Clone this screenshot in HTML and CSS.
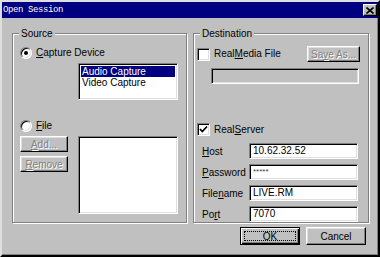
FILE: index.html
```html
<!DOCTYPE html>
<html lang="en">
<head>
    <meta charset="UTF-8">
    <title>Open Session</title>
    <link rel="stylesheet" href="styles.css">
</head>
<body>
    <div class="window">
        <div class="titlebar">
            <span class="title">Open Session</span>
            <span class="close">
                <svg width="8" height="7" viewBox="0 0 8 7">
                    <path d="M0.5 0.5 L7.5 6.5 M7.5 0.5 L0.5 6.5" stroke="#000" stroke-width="1.6" fill="none"/>
                </svg>
            </span>
        </div>

        <div class="content">
            <div class="groups">
                <!-- Source group -->
                <section class="group source">
                    <span class="legend">Source</span>
                    <label class="option">
                        <span class="radio checked"></span>
                        <span><u>C</u>apture Device</span>
                    </label>
                    <div class="listbox devices">
                        <div class="item selected">Audio Capture</div>
                        <div class="item">Video Capture</div>
                    </div>
                    <label class="option file-option">
                        <span class="radio"></span>
                        <span><u>F</u>ile</span>
                    </label>
                    <div class="file-area">
                        <div class="file-buttons">
                            <span class="btn small disabled"><u>A</u>dd...</span>
                            <span class="btn small disabled"><u>R</u>emove</span>
                        </div>
                        <div class="listbox files"></div>
                    </div>
                </section>

                <!-- Destination group -->
                <section class="group dest">
                    <span class="legend">Destination</span>
                    <div class="media-row">
                        <label class="option">
                            <span class="checkbox"></span>
                            <span>Real<u>M</u>edia File</span>
                        </label>
                        <span class="btn saveas disabled">Sa<u>v</u>e As...</span>
                    </div>
                    <div class="field path-field"></div>
                    <label class="option server-option">
                        <span class="checkbox">
                            <svg width="9" height="9" viewBox="0 0 9 9">
                                <path d="M1 4 L3.3 6.5 L8 1.5" stroke="#000" stroke-width="1.8" fill="none"/>
                            </svg>
                        </span>
                        <span>Real<u>S</u>erver</span>
                    </label>
                    <div class="server-grid">
                        <span class="field-label"><u>H</u>ost</span>
                        <span class="field">10.62.32.52</span>
                        <span class="field-label"><u>P</u>assword</span>
                        <span class="field password">*****</span>
                        <span class="field-label">File<u>n</u>ame</span>
                        <span class="field">LIVE.RM</span>
                        <span class="field-label">Po<u>r</u>t</span>
                        <span class="field">7070</span>
                    </div>
                </section>
            </div>

            <div class="actions">
                <span class="btn default"><span class="focus">OK</span></span>
                <span class="btn">Cancel</span>
            </div>
        </div>
    </div>
</body>
</html>
```

FILE: styles.css
```css
/* Global styles */
* {
    box-sizing: border-box;
}

body {
    margin: 0;
    background-color: #c0c0c0;
    font-family: "Liberation Sans", Arial, sans-serif;
    font-size: 10px;
    color: #000;
}

u {
    text-decoration: underline;
    text-underline-offset: 1px;
}

/* Window frame */
.window {
    width: 380px;
    height: 257px;
    border-style: solid;
    border-width: 2px;
    border-color: #dfdfdf #000 #000 #dfdfdf;
    box-shadow: inset -1px -1px 0 #808080;
    display: flex;
    flex-direction: column;
}

.titlebar {
    height: 16px;
    background-color: #000080;
    display: flex;
    align-items: center;
    justify-content: space-between;
    padding: 0 1px 0 1px;
}

.title {
    color: #fff;
    font-family: "Liberation Mono", monospace;
    font-size: 9px;
    letter-spacing: -0.4px;
}

.close {
    width: 14px;
    height: 12px;
    background-color: #c0c0c0;
    border: 1px solid;
    border-color: #fff #000 #000 #fff;
    box-shadow: inset -1px -1px 0 #808080;
    display: flex;
    align-items: center;
    justify-content: center;
}

.close svg {
    display: block;
}

.content {
    flex: 1;
    padding: 15px 9px 0 10px;
    display: flex;
    flex-direction: column;
}

.groups {
    display: flex;
    gap: 6px;
}

/* Etched group boxes */
.group {
    position: relative;
    height: 190px;
    border: 1px solid #808080;
    box-shadow: inset 1px 1px 0 #fff, 1px 1px 0 #fff;
    display: flex;
    flex-direction: column;
}

.legend {
    position: absolute;
    top: -7px;
    left: 6px;
    padding: 0 2px;
    background-color: #c0c0c0;
    line-height: 13px;
}

.source {
    width: 175px;
    padding: 13px 8px 0 7px;
}

.dest {
    width: 176px;
    padding: 12px 8px 0 3px;
}

/* Radio buttons and check boxes */
.option {
    display: flex;
    align-items: center;
    gap: 4px;
    height: 12px;
    line-height: 12px;
}

.radio {
    width: 12px;
    height: 12px;
    border-radius: 50%;
    background-color: #fff;
    border: 1px solid;
    border-color: #808080 #fff #fff #808080;
    box-shadow: inset 1px 1px 0 #000, inset -1px -1px 0 #dfdfdf;
    display: flex;
    align-items: center;
    justify-content: center;
}

.radio.checked::after {
    content: "";
    width: 4px;
    height: 4px;
    border-radius: 50%;
    background-color: #000;
}

.checkbox {
    width: 13px;
    height: 13px;
    background-color: #fff;
    border: 1px solid;
    border-color: #808080 #fff #fff #808080;
    box-shadow: inset 1px 1px 0 #000, inset -1px -1px 0 #dfdfdf;
    display: flex;
    align-items: center;
    justify-content: center;
}

.checkbox svg {
    display: block;
}

/* Sunken boxes */
.listbox,
.field {
    background-color: #fff;
    border: 1px solid;
    border-color: #808080 #fff #fff #808080;
    box-shadow: inset 1px 1px 0 #000, inset -1px -1px 0 #dfdfdf;
}

.listbox {
    padding: 2px;
}

.devices {
    width: 100px;
    height: 37px;
    margin: 4px 0 0 58px;
}

.item {
    height: 11px;
    line-height: 11px;
    padding-left: 1px;
}

.item.selected {
    background-color: #000080;
    color: #fff;
}

.file-option {
    margin-top: 20px;
}

.file-area {
    display: flex;
    gap: 10px;
    margin-top: 4px;
}

.file-buttons {
    display: flex;
    flex-direction: column;
    gap: 4px;
}

.files {
    width: 100px;
    height: 78px;
}

/* Push buttons */
.btn {
    width: 60px;
    height: 18px;
    background-color: #c0c0c0;
    border: 1px solid;
    border-color: #fff #000 #000 #fff;
    box-shadow: inset -1px -1px 0 #808080, inset 1px 1px 0 #dfdfdf;
    display: flex;
    align-items: center;
    justify-content: center;
}

.btn.small {
    width: 48px;
    height: 16px;
}

.btn.disabled {
    color: #808080;
    text-shadow: 1px 1px 0 #fff;
}

.saveas {
    width: 53px;
    height: 16px;
}

.media-row {
    display: flex;
    align-items: center;
    justify-content: space-between;
    height: 16px;
}

.path-field {
    width: 148px;
    height: 12px;
    margin: 6px 0 0 14px;
    background-color: #c0c0c0;
}

.server-option {
    margin-top: 39px;
    height: 13px;
}

.server-grid {
    display: grid;
    grid-template-columns: 47px 109px;
    grid-auto-rows: 16px;
    row-gap: 5px;
    margin: 7px 0 0 5px;
    align-items: center;
}

.field {
    height: 16px;
    line-height: 14px;
    padding-left: 3px;
}

.password {
    font-size: 8px;
    color: #404040;
}

/* Bottom buttons */
.actions {
    display: flex;
    justify-content: flex-end;
    gap: 6px;
    margin-top: 4px;
    padding-right: 3px;
}

.btn.default {
    border: 1px solid #000;
    box-shadow: inset 1px 1px 0 #fff, inset -1px -1px 0 #000, inset -2px -2px 0 #808080;
    padding: 3px;
}

.focus {
    width: 100%;
    height: 100%;
    border: 1px dotted #000;
    display: flex;
    align-items: center;
    justify-content: center;
}
```
